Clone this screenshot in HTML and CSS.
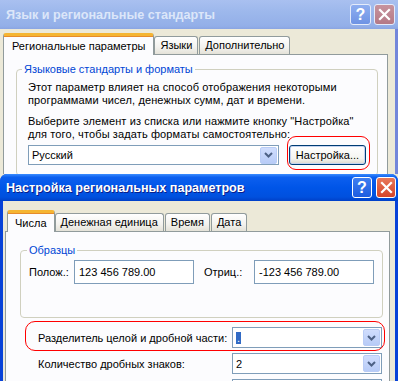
FILE: index.html
```html
<!DOCTYPE html>
<html lang="ru">
<head>
  <meta charset="UTF-8">
  <title>Язык и региональные стандарты</title>
  <link rel="stylesheet" href="styles.css">
</head>
<body>
  <div class="screen">

    <!-- фоновое окно -->
    <div class="win win-back">
      <div class="titlebar inactive">
        <span class="title">Язык и региональные стандарты</span>
        <span class="cap help">?</span>
        <span class="cap close">
          <svg width="13" height="13" viewBox="0 0 13 13"><path d="M2 2 L11 11 M11 2 L2 11" stroke="#fff" stroke-width="2.2" stroke-linecap="square"/></svg>
        </span>
      </div>
      <div class="client">
        <div class="tabs">
          <span class="tab active">Региональные параметры</span>
          <span class="tab">Языки</span>
          <span class="tab">Дополнительно</span>
        </div>
        <div class="panel">
          <fieldset class="group lang">
            <legend>Языковые стандарты и форматы</legend>
            <p>Этот параметр влияет на способ отображения некоторыми<br>программами чисел, денежных сумм, дат и времени.</p>
            <p class="second">Выберите элемент из списка или нажмите кнопку "Настройка"<br>для того, чтобы задать форматы самостоятельно:</p>
            <div class="pick">
              <div class="combo locale">
                <span class="val">Русский</span>
                <span class="drop"><svg width="9" height="6" viewBox="0 0 9 6"><path d="M1 1 L4.5 4.5 L8 1" fill="none" stroke="#4D6185" stroke-width="2"/></svg></span>
              </div>
              <span class="marked-btn"><button class="btn">Настройка...</button></span>
            </div>
          </fieldset>
        </div>
      </div>
    </div>

    <!-- активное окно -->
    <div class="win win-front">
      <div class="titlebar active-bar">
        <span class="title">Настройка региональных параметров</span>
        <span class="cap help">?</span>
        <span class="cap close">
          <svg width="13" height="13" viewBox="0 0 13 13"><path d="M2 2 L11 11 M11 2 L2 11" stroke="#fff" stroke-width="2.2" stroke-linecap="square"/></svg>
        </span>
      </div>
      <div class="client">
        <div class="tabs">
          <span class="tab active">Числа</span>
          <span class="tab">Денежная единица</span>
          <span class="tab">Время</span>
          <span class="tab">Дата</span>
        </div>
        <div class="panel">
          <fieldset class="group samples">
            <legend>Образцы</legend>
            <div class="sample-row">
              <span class="lbl">Полож.:</span>
              <span class="box">123 456 789.00</span>
              <span class="lbl lbl-neg">Отриц.:</span>
              <span class="box">-123 456 789.00</span>
            </div>
          </fieldset>

          <div class="field marked">
            <span>Разделитель целой и дробной части:</span>
            <div class="combo">
              <span class="val"><span class="sel">.</span></span>
              <span class="drop"><svg width="9" height="6" viewBox="0 0 9 6"><path d="M1 1 L4.5 4.5 L8 1" fill="none" stroke="#4D6185" stroke-width="2"/></svg></span>
            </div>
          </div>
          <div class="field">
            <span>Количество дробных знаков:</span>
            <div class="combo">
              <span class="val">2</span>
              <span class="drop"><svg width="9" height="6" viewBox="0 0 9 6"><path d="M1 1 L4.5 4.5 L8 1" fill="none" stroke="#4D6185" stroke-width="2"/></svg></span>
            </div>
          </div>
          <div class="field">
            <span></span>
            <div class="combo">
              <span class="val"></span>
              <span class="drop"></span>
            </div>
          </div>
        </div>
      </div>
    </div>

  </div>
</body>
</html>
```

FILE: styles.css
```css
* { box-sizing: border-box; }
body { margin: 0; font-family: "Liberation Sans", Arial, sans-serif; font-size: 11px; color: #000; background: #ECE9D8; }
.screen { width: 398px; height: 381px; overflow: hidden; }

/* окна */
.win-back { height: 174px; overflow: hidden; background: #7386DA; }
.win-front { height: 207px; background: #0842D8; border-radius: 7px 7px 0 0; overflow: hidden; }
.win-back .client { margin-right: 3px; height: 145px; }
.win-front .client { margin: 0 3px; height: 180px; }
.client { background: #ECE9D8; }

/* заголовок */
.titlebar { display: flex; align-items: center; gap: 3px; padding: 0 5px 0 6px; }
.title { flex: 1; font-weight: bold; font-size: 12.6px; white-space: nowrap; }
.inactive { height: 29px; padding-right: 3px; background: linear-gradient(#A9C0F0, #9DB8EC 40%, #93AFE8 90%, #8AA5E2); }
.inactive .title { color: #DCE6F9; }
.active-bar { height: 27px; gap: 4px; padding-right: 2px; background: linear-gradient(#3A8CFF, #0C5FEF 12%, #0055E8 50%, #0050DE 85%, #0040C8); }
.active-bar .title { color: #fff; text-shadow: 1px 1px #0A1E8A; }
.cap { width: 21px; height: 21px; border: 1px solid #fff; border-radius: 3px; display: flex; align-items: center; justify-content: center; color: #fff; font-weight: bold; font-size: 16px; }
.active-bar .cap { width: 20px; }
.inactive .cap { border-color: #E4EBFA; }
.inactive .help { background: linear-gradient(#8EAEF0, #6E93E4); }
.inactive .close { background: linear-gradient(#C7939E, #B47986); }
.active-bar .help { background: linear-gradient(#3F7EF0, #1D5CE0); }
.active-bar .close { background: linear-gradient(#E8785A, #D6452A); }

/* вкладки */
.tabs { display: flex; align-items: flex-end; }
.win-back .tabs { padding: 4px 0 0 3px; }
.win-front .tabs { padding: 9px 0 0 4px; }
.tab { height: 18px; line-height: 16px; padding: 0 5px; border: 1px solid #919B9C; border-bottom: none; border-radius: 3px 3px 0 0; background: linear-gradient(#FFFFFF, #F3F2EE 60%, #E4E2D8); white-space: nowrap; }
.tab + .tab { margin-left: 1px; }
.tab.active + .tab { margin-left: 0; }
.tab.active { height: 22px; line-height: 20px; padding: 0 8px; margin-bottom: -1px; position: relative; z-index: 1; background: #FCFCFE; border-top: 3px solid #F5B532; box-shadow: inset 0 1px #E68B2C; border-radius: 3px 3px 0 0; }
.win-front .tab.active { padding: 0 7px; }

.panel { border: 1px solid #919B9C; background: #FCFCFE; height: 200px; }
.win-back .panel { margin: 0 7px 0 3px; }
.win-front .panel { margin: 0 5px 0 2px; }

/* группы */
.group { min-width: 0; margin: 0; border: 1px solid #D0D0BF; border-radius: 4px; }
.group legend { padding: 0 2px; line-height: 13px; color: #0046D5; }
.lang { margin: 8px 9px 0 12px; padding: 0 0 10px 5px; }
.lang p { margin: 5px 0 0 6px; line-height: 13px; letter-spacing: 0.12px; }
.lang p.second { margin-top: 8px; }

.pick { display: flex; align-items: flex-end; margin: 4px 0 0 6px; }
.combo { display: flex; align-items: center; height: 21px; background: #fff; border: 1px solid #7F9DB9; }
.combo .val { flex: 1; padding-left: 3px; white-space: nowrap; }
.drop { width: 17px; height: 17px; margin: 1px; border: 1px solid #B9CCF6; border-radius: 2px; background: linear-gradient(#D0DDFD, #B7CBF7); display: flex; align-items: center; justify-content: center; }
.locale { width: 251px; height: 20px; }
.marked-btn { position: relative; margin-left: 10px; }
.marked-btn::after { content: ""; position: absolute; top: -9px; right: -4px; bottom: -5px; left: -2px; border: 1px solid #F00; border-radius: 9px; }
.btn { display: block; width: 77px; height: 20px; padding: 0; font: inherit; color: #000; border: 1px solid #003C74; border-radius: 3px; background: linear-gradient(#FFFFFF, #F4F4F0 70%, #DCD8CC); box-shadow: inset 0 0 0 1px #C4D3F0; }

.samples { margin: 12px 6px 0 14px; padding: 0 6px 33px 6px; }
.sample-row { display: flex; align-items: center; margin-top: 3px; padding-left: 2px; }
.lbl { width: 45px; }
.lbl-neg { width: 50px; margin-left: 10px; }
.box { width: 120px; height: 24px; line-height: 22px; padding-left: 4px; border: 1px solid #7F9DB9; background: #fff; }

.field { position: relative; display: flex; align-items: center; height: 21px; margin: 5px 7px 0 0; padding-left: 32px; }
.samples + .field { margin-top: 9px; }
.field .combo { width: 150px; margin-left: auto; }
.sel { background: #316AC5; color: #fff; padding: 0 1px; }
.marked::after { content: ""; position: absolute; top: -6px; right: -3px; bottom: -3px; left: 19px; border: 1px solid #F00; border-radius: 10px; }
```
